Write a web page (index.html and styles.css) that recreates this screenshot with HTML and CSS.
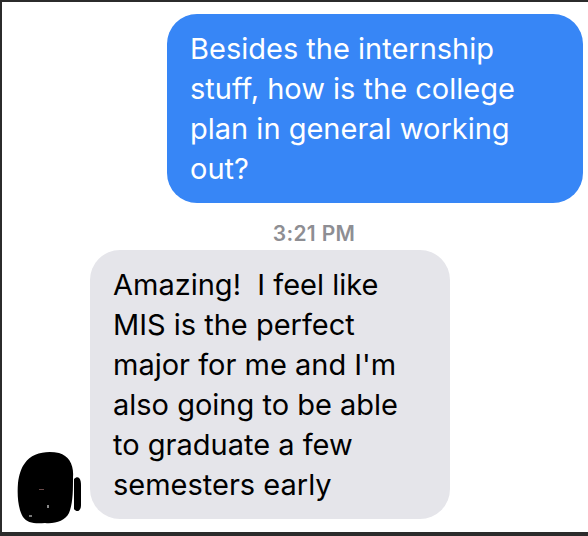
FILE: index.html
```html
<!DOCTYPE html>
<html lang="en">
<head>
    <meta charset="UTF-8">
    <title>Messages</title>
    <link rel="stylesheet" href="styles.css">
</head>
<body>
    <div class="screen">
        <div class="row row-out">
            <div class="bubble bubble-out">
                Besides the internship<br>
                stuff, how is the college<br>
                plan in general working<br>
                out?
            </div>
        </div>

        <div class="timestamp">3:21 PM</div>

        <div class="row row-in">
            <svg class="avatar" width="66" height="76" viewBox="0 0 66 76">
                <path d="M8 12 C14 2 30 -1 42 2 C52 5 57 14 56 26 C56 40 56 52 52 62 C48 70 38 73 28 72 C18 73 10 72 6 66 C1 58 0 44 1 32 C2 24 4 17 8 12 Z" fill="#000"/>
                <path d="M57 28 C61 24 64 27 64 34 L64 54 C64 60 60 62 57 58 Z" fill="#000"/>
                <rect x="22" y="38" width="5" height="1" fill="#6a4a4a"/>
                <rect x="30" y="54" width="2" height="3" fill="#888"/>
                <rect x="12" y="64" width="3" height="2" fill="#777"/>
            </svg>
            <div class="bubble bubble-in">
                Amazing!&nbsp; I feel like<br>
                MIS is the perfect<br>
                major for me and I'm<br>
                also going to be able<br>
                to graduate a few<br>
                semesters early
            </div>
        </div>
    </div>
</body>
</html>
```

FILE: styles.css
```css
* {
    margin: 0;
    padding: 0;
    box-sizing: border-box;
}

body {
    font-family: Inter, "Liberation Sans", sans-serif;
    background-color: #ffffff;
    width: 588px;
    height: 536px;
    overflow: hidden;
}

.screen {
    height: 536px;
    border-top: 2px solid #2b2b2b;
    border-left: 2px solid #2b2b2b;
    border-bottom: 4px solid #2b2b2b;
    display: flex;
    flex-direction: column;
}

.row {
    display: flex;
}

.row-out {
    justify-content: flex-end;
    padding-right: 5px;
    margin-top: 12px;
}

.bubble {
    font-size: 29px;
    line-height: 40px;
    border-radius: 30px;
    padding: 15px 22px 14px 23px;
}

.bubble-out {
    width: 416px;
    background-color: #3786f6;
    color: #ffffff;
}

.timestamp {
    padding-left: 38px;
    text-align: center;
    font-size: 21px;
    font-weight: 600;
    letter-spacing: 0.3px;
    color: #8e8e93;
    margin-top: 17px;
    line-height: 28px;
}

.row-in {
    align-items: flex-end;
    margin-top: 2px;
}

.avatar {
    margin-left: 15px;
    margin-right: 7px;
    margin-bottom: -8px;
}

.bubble-in {
    width: 360px;
    background-color: #e5e5ea;
    color: #000000;
}
```
